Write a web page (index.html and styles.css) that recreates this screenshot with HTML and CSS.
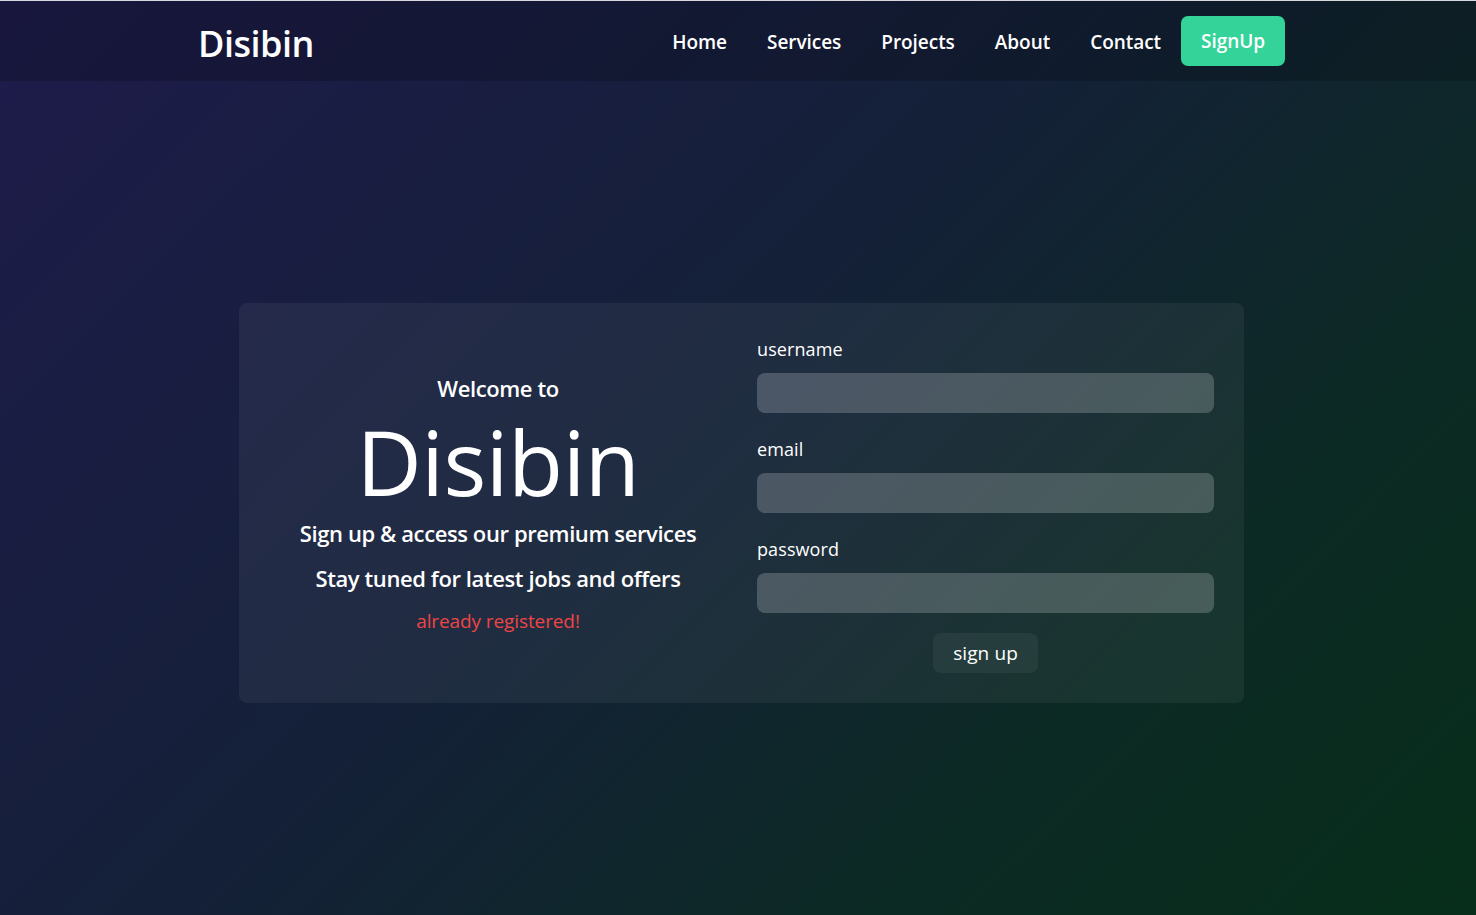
FILE: index.html
```html
<!DOCTYPE html>
<html lang="en">
<head>
<meta charset="utf-8">
<title>Disibin - Sign up</title>
<link rel="stylesheet" href="styles.css">
</head>
<body>
<div class="page">
  <header class="nav">
    <div class="brand">Disibin</div>
    <nav class="links">
      <a href="#">Home</a>
      <a href="#">Services</a>
      <a href="#">Projects</a>
      <a href="#">About</a>
      <a href="#">Contact</a>
      <a href="#" class="cta">SignUp</a>
    </nav>
  </header>
  <main class="main">
    <section class="card">
      <div class="intro">
        <p class="welcome">Welcome to</p>
        <h1 class="title">Disibin</h1>
        <p class="tag">Sign up &amp; access our premium services</p>
        <p class="tag">Stay tuned for latest jobs and offers</p>
        <p class="error">already registered!</p>
      </div>
      <form class="form">
        <label class="label">username</label>
        <input class="input" type="text">
        <label class="label">email</label>
        <input class="input" type="email">
        <label class="label">password</label>
        <input class="input" type="password">
        <button class="submit" type="button">sign up</button>
      </form>
    </section>
  </main>
</div>
</body>
</html>
```

FILE: styles.css
```css
* { box-sizing: border-box; }
html, body { margin: 0; padding: 0; height: 100%; }
body {
  font-family: "Open Sans", "Noto Sans", sans-serif;
  color: #fff;
  background: linear-gradient(135deg, #1e1b4b 0%, #142038 45%, #0c2a24 75%, #072e1a 100%);
  border-top: 1px solid #d8d8de;
}
.page { min-height: 914px; display: flex; flex-direction: column; }
.nav {
  height: 80px;
  background: rgba(0, 0, 0, 0.18);
  display: flex;
  align-items: center;
  justify-content: space-between;
  padding: 0 191px 0 199px;
}
.brand { font-size: 36px; font-weight: 600; letter-spacing: -0.5px; margin-top: 4px; margin-left: -1px; }
.links { display: flex; align-items: center; gap: 40px; margin-top: 2px; }
.links a { color: #fff; text-decoration: none; font-size: 19px; font-weight: 600; letter-spacing: -0.05px; }
.links a.cta {
  background: #34d399;
  margin-left: -20px;
  padding: 0 20px;
  height: 50px;
  line-height: 50px;
  border-radius: 7px;
  margin-top: -2px;
}
.main { flex: 1; display: flex; align-items: flex-start; padding: 222px 0 0 239px; }
.card {
  width: 1005px;
  height: 400px;
  background: rgba(255, 255, 255, 0.055);
  border-radius: 8px;
  padding: 30px;
  display: grid;
  grid-template-columns: 458px 457px;
  column-gap: 30px;
}
.intro { align-self: center; text-align: center; margin-top: 7px; }
.intro p { margin: 0; }
.welcome { font-size: 22px; font-weight: 600; letter-spacing: -0.4px; line-height: 30px; }
.title { margin: 8px 0 0; font-size: 90px; font-weight: 400; line-height: 100px; letter-spacing: -0.5px; }
.tag { font-size: 22px; font-weight: 600; letter-spacing: -0.4px; line-height: 45px; }
.error { color: #ef4444; font-size: 19px; line-height: 40px; letter-spacing: -0.1px; }
.form { display: flex; flex-direction: column; align-items: stretch; }
.label { font-size: 18px; line-height: 30px; height: 30px; margin-top: 1px; margin-bottom: 9px; letter-spacing: 0.1px; }
.input {
  height: 40px;
  border: none;
  border-radius: 8px;
  background: rgba(255, 255, 255, 0.2);
  margin-bottom: 20px;
  outline: none;
}
.submit {
  align-self: center;
  height: 40px;
  padding: 0 20px;
  border: none;
  border-radius: 8px;
  background: rgba(255, 255, 255, 0.05);
  color: #fff;
  font-family: inherit;
  font-size: 19px;
  letter-spacing: 0.1px;
  margin-top: 0;
}
```
